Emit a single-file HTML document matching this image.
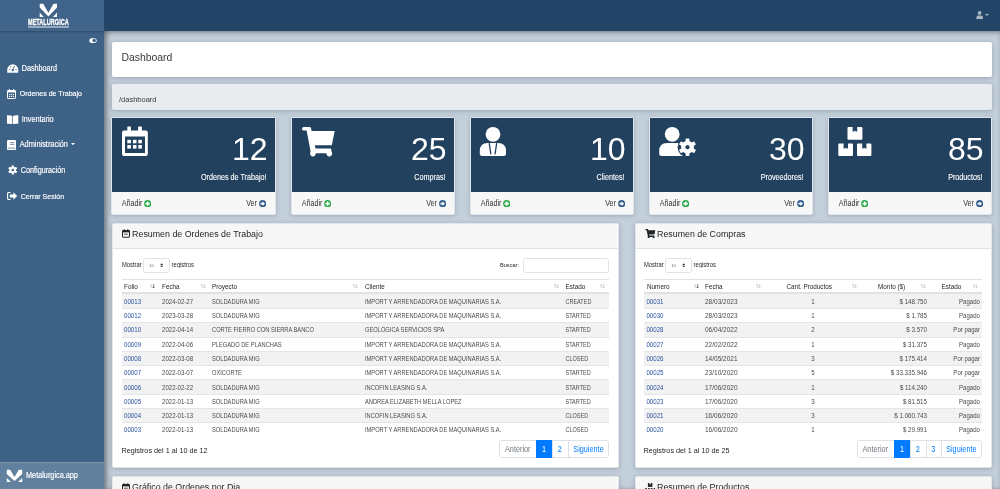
<!DOCTYPE html><html><head><meta charset="utf-8"><style>
*{margin:0;padding:0;box-sizing:border-box}
html,body{width:1000px;height:489px;overflow:hidden}
#wrap{position:absolute;left:0;top:0;width:1000px;height:489px;overflow:hidden;will-change:transform;background:#c3d0dc}
body{font-family:"Liberation Sans", sans-serif;background:#c3d0dc;position:relative;color:#212529}
.a{position:absolute;white-space:nowrap}
#side{position:absolute;left:0;top:0;width:104px;height:489px;background:#3e6186}
#logo{position:absolute;left:0;top:0;width:104px;height:31px;background:#41658a;box-shadow:0 1px 2px rgba(0,0,0,.25)}
#sfoot{position:absolute;left:0;top:462px;width:104px;height:27px;background:#61819f;border-top:1px solid #8193a6}
#top{position:absolute;left:104px;top:0;width:896px;height:31px;background:#234567}
#shade{position:absolute;left:104px;top:31px;width:896px;height:458px;box-shadow:inset 4px 0 5px -1px rgba(0,0,0,.36),inset 0 3px 5px -1px rgba(0,0,0,.24)}
.menu{color:#fff;font-size:7.2px;-webkit-text-stroke:0.15px #fff;transform:scaleY(1.15);transform-origin:0 6.5px}
.card{position:absolute;background:#fff;border-radius:2px;box-shadow:0 1px 5px rgba(0,0,0,.22)}
.stat{position:absolute;top:117px;width:164.4px;height:98px;border:1px solid #e2e6ea;border-radius:2px;background:#f7f7f7;box-shadow:0 1px 4px rgba(0,0,0,.18)}
.stat .dk{position:absolute;left:0;top:0;right:0;height:74px;background:#21415f}
.num{color:#fff;font-size:32px;}
.lbl{color:#fff;font-size:7.2px;-webkit-text-stroke:0.1px #fff;transform:scaleY(1.15);transform-origin:0 6.5px}
.ft{color:#333;font-size:7.2px;transform:scaleY(1.15);transform-origin:0 6.5px}
.ph{position:absolute;left:0;top:0;right:0;height:25.5px;background:#f7f7f7;border-bottom:1px solid #dfe3e7;border-radius:3px 3px 0 0}
.pt{font-size:8.85px;color:#212529}
.sm{font-size:5.8px;color:#212529;transform:scaleY(1.2);transform-origin:0 1.5px}
.th{font-size:6.2px;color:#212529;transform:scaleY(1.15);transform-origin:0 5.5px}
.td{font-size:6.1px;color:#464a4e;transform:scaleY(1.1);transform-origin:0 5.5px}
.lnk{color:#2a52a0}
.row{position:absolute;height:14.2px;border-top:1px solid #dee2e6}
.odd{background:#f2f2f2}
.pg{position:absolute;top:440px;height:17.6px;border:1px solid #dee2e6;border-radius:2px;background:#fff;display:flex}
.pg span{display:block;height:100%;border-left:1px solid #dee2e6;font-size:7.3px;color:#007bff;text-align:center;line-height:16px}
.pg span:first-child{border-left:0;color:#6c757d}
.pg span.act{background:#007bff;color:#fff;border-color:#007bff}
</style></head><body><div id="wrap"><div id="side"><div id="logo"><svg class="a" style="left:0;top:0" width="104" height="31" viewBox="0 0 104 31"><polygon fill="#fff" points="39.7,3.7 43.2,3.7 48.4,12.7 53.5,3.7 57,3.7 57,7.4 48.4,16.4 39.7,7.4"/><polygon fill="#fff" points="39.7,12.6 39.7,17 43.7,17"/><polygon fill="#fff" points="57,12.6 57,17 53,17"/></svg><div class="a" style="left:28px;top:16.5px;width:41px;font-size:8.4px;font-weight:bold;color:#fff;line-height:10px;letter-spacing:0px;-webkit-text-stroke:0.3px #fff;transform:scaleX(.665);transform-origin:0 0">METALURGICA</div><div class="a" style="left:28px;top:26.2px;width:41px;height:1.8px;background:rgba(255,255,255,.45)"></div></div><svg class="a" style="left:89.3px;top:38px" width="8" height="5.2" viewBox="0 0 9 6"><rect x="0.2" y="0.2" width="8.6" height="5.6" rx="2.8" fill="#fff"/><circle cx="5.9" cy="3" r="2" fill="#3e6186"/></svg><div class="a menu" style="left:21.8px;top:65.0px;line-height:8px;font-size:7.2px">Dashboard</div><div class="a menu" style="left:19.7px;top:90.4px;line-height:8px;font-size:7.05px">Ordenes de Trabajo</div><div class="a menu" style="left:21.8px;top:115.9px;line-height:8px;font-size:7.26px">Inventario</div><div class="a menu" style="left:19.7px;top:141.4px;line-height:8px;font-size:7.36px">Administración</div><div class="a menu" style="left:20.8px;top:167.2px;line-height:8px;font-size:7.23px">Configuración</div><div class="a menu" style="left:20.8px;top:193.0px;line-height:8px;font-size:7.02px">Cerrar Sesión</div><svg class="a" style="left:71px;top:143.2px" width="4" height="2.2" viewBox="0 0 4 2.2"><path d="M0 0h4L2 2.2z" fill="#fff"/></svg><svg class="a" style="left:7px;top:64px" width="11.5" height="9" viewBox="0 0 11.5 9"><path d="M5.75 0.3A5.5 5.5 0 0 0 0.25 5.8v2.9h11v-2.9A5.5 5.5 0 0 0 5.75 0.3z" fill="#fff"/><circle cx="5.75" cy="6.2" r="1.1" fill="#3e6186"/><path d="M5.6 6.2L7.6 2" stroke="#3e6186" stroke-width="0.9"/><circle cx="2.4" cy="5.5" r="0.6" fill="#3e6186"/><circle cx="9.1" cy="5.5" r="0.6" fill="#3e6186"/><circle cx="3.4" cy="3" r="0.6" fill="#3e6186"/></svg><svg class="a" style="left:7px;top:89.3px" width="9" height="10" viewBox="0 0 9 10"><rect x="0.5" y="1.5" width="8" height="8" rx="0.6" fill="none" stroke="#fff" stroke-width="1"/><rect x="0.5" y="1.5" width="8" height="2" fill="#fff"/><rect x="1.9" y="0" width="1" height="2" fill="#fff"/><rect x="6.1" y="0" width="1" height="2" fill="#fff"/><g fill="#fff"><rect x="2" y="5" width="1.2" height="1.1"/><rect x="3.9" y="5" width="1.2" height="1.1"/><rect x="5.8" y="5" width="1.2" height="1.1"/><rect x="2" y="6.9" width="1.2" height="1.1"/><rect x="3.9" y="6.9" width="1.2" height="1.1"/><rect x="5.8" y="6.9" width="1.2" height="1.1"/></g></svg><svg class="a" style="left:7px;top:114.7px" width="11.5" height="9.5" viewBox="0 0 11.5 9.5"><path d="M0 0.3Q2.8 -0.2 5.3 1v8.5Q2.8 8.3 0 8.8z" fill="#fff"/><path d="M11.3 0.3Q8.5 -0.2 6 1v8.5Q8.5 8.3 11.3 8.8z" fill="#fff"/></svg><svg class="a" style="left:7px;top:139.8px" width="9.5" height="10.5" viewBox="0 0 9.5 10.5"><rect x="0" y="0" width="9" height="10.2" rx="1.2" fill="#fff"/><g stroke="#3e6186" stroke-width="0.7"><path d="M3 2.6h4.5M3 4.4h4.5"/><path d="M1 8.1h7.3"/></g></svg><svg class="a" style="left:7.7px;top:165.2px" width="9.5" height="10" viewBox="-5 -5 10 10"><g fill="#fff"><circle r="3.4"/><rect x="-1.1" y="-4.8" width="2.2" height="2.2" transform="rotate(0)"/><rect x="-1.1" y="-4.8" width="2.2" height="2.2" transform="rotate(60)"/><rect x="-1.1" y="-4.8" width="2.2" height="2.2" transform="rotate(120)"/><rect x="-1.1" y="-4.8" width="2.2" height="2.2" transform="rotate(180)"/><rect x="-1.1" y="-4.8" width="2.2" height="2.2" transform="rotate(240)"/><rect x="-1.1" y="-4.8" width="2.2" height="2.2" transform="rotate(300)"/></g><circle r="1.3" fill="#3e6186"/></svg><svg class="a" style="left:7px;top:192.3px" width="10.5" height="8" viewBox="0 0 10.5 8"><path d="M3.6 0.5H1.6Q0.6 0.5 0.6 1.5v5Q0.6 7.5 1.6 7.5h2" fill="none" stroke="#fff" stroke-width="1.1"/><path d="M2.8 2.6h3.6V0.3L10.2 4 6.4 7.7V5.4H2.8z" fill="#fff"/></svg><div id="sfoot"><svg class="a" style="left:0;top:0" width="30" height="26" viewBox="0 0 30 26"><polygon fill="#fff" points="6.8,6.7 10.1,6.7 14.5,13.9 18.9,6.7 22.2,6.7 22.2,11.1 14.5,17.9 6.8,11.1"/><polygon fill="#fff" points="6.8,15 6.8,18.9 10.9,18.9"/><polygon fill="#fff" points="22.2,15 22.2,18.9 18.1,18.9"/></svg><div class="a" style="left:26px;top:8.9px;font-size:7.3px;color:#fff;line-height:8px;-webkit-text-stroke:0.15px #fff;transform:scaleY(1.15);transform-origin:0 6.5px">Metalurgica.app</div></div></div><div id="top"><svg class="a" style="left:872px;top:10px" width="14" height="10" viewBox="0 0 14 10"><circle cx="3.6" cy="2.9" r="1.9" fill="#a7b5c3"/><path d="M0.3 9.1v-1.2Q0.3 5.6 2.4 5.6h2.5Q7 5.6 7 7.9v1.2z" fill="#a7b5c3"/><path d="M8.8 4h4.3L10.95 6z" fill="#a7b5c3"/></svg></div><div id="shade"></div><div class="card" style="left:112px;top:42px;width:880px;height:35px"><div class="a" style="left:9.5px;top:9.5px;font-size:10.4px;color:#3a3a3a;line-height:12px;transform:scaleY(1.05);transform-origin:0 10px">Dashboard</div></div><div class="card" style="left:112px;top:84px;width:880px;height:26px;background:#e9ecef"><div class="a" style="left:7px;top:11.7px;font-size:7.5px;color:#3a3a3a;line-height:8px">/dashboard</div></div><div class="stat" style="left:111px;width:165px"><div class="dk"></div><div class="a num" style="right:7.5px;top:15px;line-height:32px">12</div><div class="a lbl" style="right:8.5px;top:56px;line-height:8px">Ordenes de Trabajo!</div><div class="a ft" style="left:9.7px;top:82.2px;line-height:8px">Añadir</div><svg class="a" style="left:32.1px;top:81.5px" width="7.3" height="7.3" viewBox="0 0 8 8"><circle cx="4" cy="4" r="3.9" fill="#28a745"/><path d="M4 1.6v4.8M1.6 4h4.8" stroke="#fff" stroke-width="1.8"/></svg><div class="a ft" style="right:18px;top:82.2px;line-height:8px">Ver</div><svg class="a" style="left:147px;top:81.5px" width="7.3" height="7.3" viewBox="0 0 8 8"><circle cx="4" cy="4" r="3.9" fill="#2f5b8a"/><path d="M1.6 3.1h2.2V1.4L6.6 4 3.8 6.6V4.9H1.6z" fill="#fff"/></svg></div><div class="stat" style="left:291px;width:164px"><div class="dk"></div><div class="a num" style="right:7.5px;top:15px;line-height:32px">25</div><div class="a lbl" style="right:8.5px;top:56px;line-height:8px">Compras!</div><div class="a ft" style="left:9.7px;top:82.2px;line-height:8px">Añadir</div><svg class="a" style="left:32.1px;top:81.5px" width="7.3" height="7.3" viewBox="0 0 8 8"><circle cx="4" cy="4" r="3.9" fill="#28a745"/><path d="M4 1.6v4.8M1.6 4h4.8" stroke="#fff" stroke-width="1.8"/></svg><div class="a ft" style="right:17px;top:82.2px;line-height:8px">Ver</div><svg class="a" style="left:147px;top:81.5px" width="7.3" height="7.3" viewBox="0 0 8 8"><circle cx="4" cy="4" r="3.9" fill="#2f5b8a"/><path d="M1.6 3.1h2.2V1.4L6.6 4 3.8 6.6V4.9H1.6z" fill="#fff"/></svg></div><div class="stat" style="left:470px;width:164px"><div class="dk"></div><div class="a num" style="right:7.5px;top:15px;line-height:32px">10</div><div class="a lbl" style="right:8.5px;top:56px;line-height:8px">Clientes!</div><div class="a ft" style="left:9.7px;top:82.2px;line-height:8px">Añadir</div><svg class="a" style="left:32.1px;top:81.5px" width="7.3" height="7.3" viewBox="0 0 8 8"><circle cx="4" cy="4" r="3.9" fill="#28a745"/><path d="M4 1.6v4.8M1.6 4h4.8" stroke="#fff" stroke-width="1.8"/></svg><div class="a ft" style="right:17px;top:82.2px;line-height:8px">Ver</div><svg class="a" style="left:147px;top:81.5px" width="7.3" height="7.3" viewBox="0 0 8 8"><circle cx="4" cy="4" r="3.9" fill="#2f5b8a"/><path d="M1.6 3.1h2.2V1.4L6.6 4 3.8 6.6V4.9H1.6z" fill="#fff"/></svg></div><div class="stat" style="left:649px;width:164px"><div class="dk"></div><div class="a num" style="right:7.5px;top:15px;line-height:32px">30</div><div class="a lbl" style="right:8.5px;top:56px;line-height:8px">Proveedores!</div><div class="a ft" style="left:9.7px;top:82.2px;line-height:8px">Añadir</div><svg class="a" style="left:32.1px;top:81.5px" width="7.3" height="7.3" viewBox="0 0 8 8"><circle cx="4" cy="4" r="3.9" fill="#28a745"/><path d="M4 1.6v4.8M1.6 4h4.8" stroke="#fff" stroke-width="1.8"/></svg><div class="a ft" style="right:17px;top:82.2px;line-height:8px">Ver</div><svg class="a" style="left:147px;top:81.5px" width="7.3" height="7.3" viewBox="0 0 8 8"><circle cx="4" cy="4" r="3.9" fill="#2f5b8a"/><path d="M1.6 3.1h2.2V1.4L6.6 4 3.8 6.6V4.9H1.6z" fill="#fff"/></svg></div><div class="stat" style="left:828px;width:164px"><div class="dk"></div><div class="a num" style="right:7.5px;top:15px;line-height:32px">85</div><div class="a lbl" style="right:8.5px;top:56px;line-height:8px">Productos!</div><div class="a ft" style="left:9.7px;top:82.2px;line-height:8px">Añadir</div><svg class="a" style="left:32.1px;top:81.5px" width="7.3" height="7.3" viewBox="0 0 8 8"><circle cx="4" cy="4" r="3.9" fill="#28a745"/><path d="M4 1.6v4.8M1.6 4h4.8" stroke="#fff" stroke-width="1.8"/></svg><div class="a ft" style="right:17px;top:82.2px;line-height:8px">Ver</div><svg class="a" style="left:147px;top:81.5px" width="7.3" height="7.3" viewBox="0 0 8 8"><circle cx="4" cy="4" r="3.9" fill="#2f5b8a"/><path d="M1.6 3.1h2.2V1.4L6.6 4 3.8 6.6V4.9H1.6z" fill="#fff"/></svg></div><div class="card" style="left:112px;top:222.5px;width:506.5px;height:245px;border:1px solid #e3e7eb"><div class="ph"></div><div class="a pt" style="left:19.1px;top:5.1px;line-height:10px">Resumen de Ordenes de Trabajo</div><svg class="a" style="left:9px;top:5.8px" width="8" height="8.8" viewBox="0 0 8.5 9"><rect x="0.55" y="1.5" width="7.4" height="7" rx="0.9" fill="none" stroke="#212529" stroke-width="1.1"/><rect x="0.5" y="1.5" width="7.5" height="1.9" fill="#212529"/><rect x="1.8" y="0.1" width="1.1" height="2" fill="#212529"/><rect x="5.6" y="0.1" width="1.1" height="2" fill="#212529"/><rect x="2.2" y="4.6" width="4" height="1.6" fill="#888"/></svg></div><div class="card" style="left:635px;top:222.5px;width:357px;height:245px;border:1px solid #e3e7eb"><div class="ph"></div><div class="a pt" style="left:21.0px;top:5.1px;line-height:10px">Resumen de Compras</div><svg class="a" style="left:8.5px;top:5.3px" width="11" height="9.5" viewBox="0 0 34 31"><g fill="#212529"><path d="M1.85 0h5.6q1.2 0 1.5 1.2l4.6 20.3h14.5q1.3 0 1.3 1.3v2.3q0 1.2-1.3 1.2H10.2q-1.2 0-1.5-1.2L4.6 3.7H1.85a1.85 1.85 0 0 1 0-3.7z"/><path d="M5.6 4h27.1l-2.9 14.3H9z"/><circle cx="10.9" cy="26.7" r="3.2"/><circle cx="27.3" cy="26.7" r="3.2"/></g></svg></div><div class="card" style="left:112px;top:476px;width:506.5px;height:40px;border:1px solid #e3e7eb"><div class="ph"></div><div class="a pt" style="left:19.1px;top:5.1px;line-height:10px">Gráfico de Ordenes por Dia</div><svg class="a" style="left:9px;top:5.8px" width="8" height="8.8" viewBox="0 0 8.5 9"><rect x="0.55" y="1.5" width="7.4" height="7" rx="0.9" fill="none" stroke="#212529" stroke-width="1.1"/><rect x="0.5" y="1.5" width="7.5" height="1.9" fill="#212529"/><rect x="1.8" y="0.1" width="1.1" height="2" fill="#212529"/><rect x="5.6" y="0.1" width="1.1" height="2" fill="#212529"/><rect x="2.2" y="4.6" width="4" height="1.6" fill="#888"/></svg></div><div class="card" style="left:635px;top:476px;width:357px;height:40px;border:1px solid #e3e7eb"><div class="ph"></div><div class="a pt" style="left:21.0px;top:5.1px;line-height:10px">Resumen de Productos</div><svg class="a" style="left:8.5px;top:6px" width="10.5" height="9" viewBox="0 0 34 30"><g fill="#212529"><rect x="9.2" y="0" width="14.9" height="12.9"/><rect x="0" y="16.6" width="14.7" height="12.4"/><rect x="18.7" y="16.6" width="14.4" height="12.4"/></g><g fill="#f7f7f7"><rect x="14.3" y="-0.5" width="4.6" height="5"/><rect x="5.3" y="16.1" width="4.4" height="5.5"/><rect x="23.9" y="16.1" width="4.2" height="5.5"/></g></svg></div><svg class="a" style="left:112px;top:118px;overflow:visible" width="163" height="74"><svg x="10" y="8.4" width="26" height="30" viewBox="0 0 26 30" overflow="visible"><path fill-rule="evenodd" fill="#fff" d="M2 4.2h21.8a2 2 0 0 1 2 2v21.3a2 2 0 0 1-2 2H2a2 2 0 0 1-2-2V6.2a2 2 0 0 1 2-2zM3 10v16.5h20V10z"/><rect fill="#fff" x="5.3" y="0" width="3.6" height="5" rx="0.5"/><rect fill="#fff" x="16.1" y="0" width="3.8" height="5" rx="0.5"/><g fill="#fff"><rect x="5.3" y="13.4" width="3.6" height="3.5"/><rect x="10.9" y="13.4" width="3.6" height="3.5"/><rect x="16.3" y="13.4" width="3.6" height="3.5"/><rect x="5.3" y="18.6" width="3.6" height="3.6"/><rect x="10.9" y="18.6" width="3.6" height="3.6"/><rect x="16.3" y="18.6" width="3.6" height="3.6"/></g></svg></svg><svg class="a" style="left:292px;top:118px;overflow:visible" width="163" height="74"><svg x="10" y="8.9" width="34" height="31" viewBox="0 0 34 31" overflow="visible"><g fill="#fff"><path d="M1.85 0h5.6q1.2 0 1.5 1.2l4.6 20.3h14.5q1.3 0 1.3 1.3v2.3q0 1.2-1.3 1.2H10.2q-1.2 0-1.5-1.2L4.6 3.7H1.85a1.85 1.85 0 0 1 0-3.7z"/><path d="M5.6 4h27.1l-2.9 14.3H9z"/><circle cx="10.9" cy="26.7" r="2.8"/><circle cx="27.3" cy="26.7" r="2.8"/></g></svg></svg><svg class="a" style="left:471px;top:118px;overflow:visible" width="163" height="74"><svg x="8.8" y="8.8" width="27" height="30" viewBox="0 0 27 30" overflow="visible"><circle cx="13.2" cy="7.5" r="7.4" fill="#fff"/><path fill="#fff" d="M0 26.8v-2.6q0-8 8-8h10.2q8 0 8 8v2.6q0 2.5-2.5 2.5H2.5Q0 29.3 0 26.8z"/><path d="M9.4 16.3l1.7 11.2M16.9 16.3l-1.7 11.2" stroke="#21415f" stroke-width="1.3"/></svg></svg><svg class="a" style="left:650px;top:118px;overflow:visible" width="163" height="74"><svg x="9.2" y="8.8" width="39" height="30" viewBox="0 0 39 30" overflow="visible"><circle cx="13" cy="7.5" r="7.4" fill="#fff"/><path fill="#fff" d="M0 26.8v-2.6q0-8 8-8h10.2q8 0 8 8v2.6q0 2.5-2.5 2.5H2.5Q0 29.3 0 26.8z"/><circle cx="28.3" cy="20.4" r="9.9" fill="#21415f"/><g transform="translate(28.3 20.4)" fill="#fff"><circle r="6.4"/><rect x="-1.9" y="-8.7" width="3.8" height="3.6" rx="0.6" transform="rotate(0)"/><rect x="-1.9" y="-8.7" width="3.8" height="3.6" rx="0.6" transform="rotate(60)"/><rect x="-1.9" y="-8.7" width="3.8" height="3.6" rx="0.6" transform="rotate(120)"/><rect x="-1.9" y="-8.7" width="3.8" height="3.6" rx="0.6" transform="rotate(180)"/><rect x="-1.9" y="-8.7" width="3.8" height="3.6" rx="0.6" transform="rotate(240)"/><rect x="-1.9" y="-8.7" width="3.8" height="3.6" rx="0.6" transform="rotate(300)"/><circle r="2.1" fill="#21415f"/></g></svg></svg><svg class="a" style="left:829px;top:118px;overflow:visible" width="163" height="74"><svg x="9.3" y="8.9" width="34" height="30" viewBox="0 0 34 30" overflow="visible"><g fill="#fff"><rect x="9.2" y="0" width="14.9" height="12.9" rx="1"/><rect x="0" y="16.6" width="14.7" height="12.4" rx="1"/><rect x="18.7" y="16.6" width="14.4" height="12.4" rx="1"/></g><g fill="#21415f"><path d="M14.3 -0.5h4.6v5h-1.3l-1 -0.8-1 0.8h-1.3z"/><path d="M5.3 16.1h4.4v5.5h-1.2l-1 -0.8-1 0.8h-1.2z"/><path d="M23.9 16.1h4.2v5.5h-1.1l-1 -0.8-1 0.8h-1.1z"/></g></svg></svg><div class="a sm" style="left:122px;top:261px;line-height:7px">Mostrar</div><div class="a" style="left:143.0px;top:258px;width:27px;height:14.5px;border:1px solid #dfe3e8;border-radius:2.5px;background:#fff"></div><div class="a" style="left:149.2px;top:262.6px;font-size:4.3px;color:#6c7278;line-height:5px">10</div><svg class="a" style="left:160.2px;top:262.6px" width="3.4" height="4.8" viewBox="0 0 3.4 4.8"><path d="M0.2 2L1.7 0.2 3.2 2zM0.2 2.8L1.7 4.6 3.2 2.8z" fill="#333"/></svg><div class="a sm" style="left:171.6px;top:261px;line-height:7px">registros</div><div class="a sm" style="left:500px;top:261.5px;line-height:7px;font-size:5.6px;transform:none">Buscar:</div><div class="a" style="left:523.2px;top:258px;width:86px;height:15px;border:1px solid #dfe3e8;border-radius:2.5px;background:#fff"></div><div class="a" style="left:122px;top:279px;width:487.3px;height:1px;background:#dee2e6"></div><div class="a th" style="left:124px;top:283.00px;font-size:6.35px;line-height:7px">Folio</div><svg class="a" style="left:150.2px;top:284.4px" width="5" height="4.5" viewBox="0 0 5 4.5"><path d="M1.2 4.3V0.6M0.2 1.6L1.2 0.4 2.2 1.6" stroke="#b5b9bd" stroke-width="0.6" fill="none"/><path d="M3.6 0.2V3.9M2.6 2.9L3.6 4.1 4.6 2.9" stroke="#333" stroke-width="0.6" fill="none"/></svg><div class="a th" style="left:162px;top:283.00px;font-size:6.35px;line-height:7px">Fecha</div><svg class="a" style="left:200.8px;top:284.4px" width="5" height="4.5" viewBox="0 0 5 4.5"><path d="M1.2 4.3V0.6M0.2 1.6L1.2 0.4 2.2 1.6" stroke="#b5b9bd" stroke-width="0.6" fill="none"/><path d="M3.6 0.2V3.9M2.6 2.9L3.6 4.1 4.6 2.9" stroke="#b5b9bd" stroke-width="0.6" fill="none"/></svg><div class="a th" style="left:212px;top:283.00px;font-size:6.35px;line-height:7px">Proyecto</div><svg class="a" style="left:353px;top:284.4px" width="5" height="4.5" viewBox="0 0 5 4.5"><path d="M1.2 4.3V0.6M0.2 1.6L1.2 0.4 2.2 1.6" stroke="#b5b9bd" stroke-width="0.6" fill="none"/><path d="M3.6 0.2V3.9M2.6 2.9L3.6 4.1 4.6 2.9" stroke="#b5b9bd" stroke-width="0.6" fill="none"/></svg><div class="a th" style="left:365px;top:283.00px;font-size:6.35px;line-height:7px">Cliente</div><svg class="a" style="left:553.8px;top:284.4px" width="5" height="4.5" viewBox="0 0 5 4.5"><path d="M1.2 4.3V0.6M0.2 1.6L1.2 0.4 2.2 1.6" stroke="#b5b9bd" stroke-width="0.6" fill="none"/><path d="M3.6 0.2V3.9M2.6 2.9L3.6 4.1 4.6 2.9" stroke="#b5b9bd" stroke-width="0.6" fill="none"/></svg><div class="a th" style="left:565.5px;top:283.00px;font-size:6.35px;line-height:7px">Estado</div><svg class="a" style="left:600.3px;top:284.4px" width="5" height="4.5" viewBox="0 0 5 4.5"><path d="M1.2 4.3V0.6M0.2 1.6L1.2 0.4 2.2 1.6" stroke="#b5b9bd" stroke-width="0.6" fill="none"/><path d="M3.6 0.2V3.9M2.6 2.9L3.6 4.1 4.6 2.9" stroke="#b5b9bd" stroke-width="0.6" fill="none"/></svg><div class="a" style="left:122px;top:292.3px;width:487.3px;height:1.6px;background:#dee2e6"></div><div class="a" style="left:122px;top:293.70px;width:487.3px;height:14.29px;background:#f2f2f2"></div><div class="a td lnk" style="left:124px;top:298.00px;font-size:6.15px;line-height:7px">00013</div><div class="a td" style="left:162px;top:298.00px;font-size:6.08px;line-height:7px">2024-02-27</div><div class="a td" style="left:212px;top:299.00px;font-size:5.72px;line-height:7px;transform:scaleY(1.22)">SOLDADURA MIG</div><div class="a td" style="left:365px;top:299.00px;font-size:5.73px;line-height:7px;transform:scaleY(1.22)">IMPORT Y ARRENDADORA DE MAQUINARIAS S.A.</div><div class="a td" style="left:565.5px;top:299.00px;font-size:5.5px;line-height:7px;transform:scaleY(1.22)">CREATED</div><div class="a" style="left:122px;top:307.99px;width:487.3px;height:1px;background:#e3e6e9"></div><div class="a td lnk" style="left:124px;top:312.00px;font-size:6.15px;line-height:7px">00012</div><div class="a td" style="left:162px;top:312.00px;font-size:6.08px;line-height:7px">2023-03-28</div><div class="a td" style="left:212px;top:313.00px;font-size:5.72px;line-height:7px;transform:scaleY(1.22)">SOLDADURA MIG</div><div class="a td" style="left:365px;top:313.00px;font-size:5.73px;line-height:7px;transform:scaleY(1.22)">IMPORT Y ARRENDADORA DE MAQUINARIAS S.A.</div><div class="a td" style="left:565.5px;top:313.00px;font-size:5.5px;line-height:7px;transform:scaleY(1.22)">STARTED</div><div class="a" style="left:122px;top:322.28px;width:487.3px;height:14.29px;background:#f2f2f2"></div><div class="a" style="left:122px;top:322.28px;width:487.3px;height:1px;background:#e3e6e9"></div><div class="a td lnk" style="left:124px;top:326.00px;font-size:6.15px;line-height:7px">00010</div><div class="a td" style="left:162px;top:326.00px;font-size:6.08px;line-height:7px">2022-04-14</div><div class="a td" style="left:212px;top:327.00px;font-size:5.72px;line-height:7px;transform:scaleY(1.22)">CORTE FIERRO CON SIERRA BANCO</div><div class="a td" style="left:365px;top:327.00px;font-size:5.73px;line-height:7px;transform:scaleY(1.22)">GEOLOGICA SERVICIOS SPA</div><div class="a td" style="left:565.5px;top:327.00px;font-size:5.5px;line-height:7px;transform:scaleY(1.22)">STARTED</div><div class="a" style="left:122px;top:336.57px;width:487.3px;height:1px;background:#e3e6e9"></div><div class="a td lnk" style="left:124px;top:341.00px;font-size:6.15px;line-height:7px">00009</div><div class="a td" style="left:162px;top:341.00px;font-size:6.08px;line-height:7px">2022-04-06</div><div class="a td" style="left:212px;top:342.00px;font-size:5.72px;line-height:7px;transform:scaleY(1.22)">PLEGADO DE PLANCHAS</div><div class="a td" style="left:365px;top:342.00px;font-size:5.73px;line-height:7px;transform:scaleY(1.22)">IMPORT Y ARRENDADORA DE MAQUINARIAS S.A.</div><div class="a td" style="left:565.5px;top:342.00px;font-size:5.5px;line-height:7px;transform:scaleY(1.22)">STARTED</div><div class="a" style="left:122px;top:350.86px;width:487.3px;height:14.29px;background:#f2f2f2"></div><div class="a" style="left:122px;top:350.86px;width:487.3px;height:1px;background:#e3e6e9"></div><div class="a td lnk" style="left:124px;top:355.00px;font-size:6.15px;line-height:7px">00008</div><div class="a td" style="left:162px;top:355.00px;font-size:6.08px;line-height:7px">2022-03-08</div><div class="a td" style="left:212px;top:356.00px;font-size:5.72px;line-height:7px;transform:scaleY(1.22)">SOLDADURA MIG</div><div class="a td" style="left:365px;top:356.00px;font-size:5.73px;line-height:7px;transform:scaleY(1.22)">IMPORT Y ARRENDADORA DE MAQUINARIAS S.A.</div><div class="a td" style="left:565.5px;top:356.00px;font-size:5.5px;line-height:7px;transform:scaleY(1.22)">CLOSED</div><div class="a" style="left:122px;top:365.15px;width:487.3px;height:1px;background:#e3e6e9"></div><div class="a td lnk" style="left:124px;top:369.00px;font-size:6.15px;line-height:7px">00007</div><div class="a td" style="left:162px;top:369.00px;font-size:6.08px;line-height:7px">2022-03-07</div><div class="a td" style="left:212px;top:370.00px;font-size:5.72px;line-height:7px;transform:scaleY(1.22)">OXICORTE</div><div class="a td" style="left:365px;top:370.00px;font-size:5.73px;line-height:7px;transform:scaleY(1.22)">IMPORT Y ARRENDADORA DE MAQUINARIAS S.A.</div><div class="a td" style="left:565.5px;top:370.00px;font-size:5.5px;line-height:7px;transform:scaleY(1.22)">STARTED</div><div class="a" style="left:122px;top:379.44px;width:487.3px;height:14.29px;background:#f2f2f2"></div><div class="a" style="left:122px;top:379.44px;width:487.3px;height:1px;background:#e3e6e9"></div><div class="a td lnk" style="left:124px;top:384.00px;font-size:6.15px;line-height:7px">00006</div><div class="a td" style="left:162px;top:384.00px;font-size:6.08px;line-height:7px">2022-02-22</div><div class="a td" style="left:212px;top:385.00px;font-size:5.72px;line-height:7px;transform:scaleY(1.22)">SOLDADURA MIG</div><div class="a td" style="left:365px;top:385.00px;font-size:5.73px;line-height:7px;transform:scaleY(1.22)">INCOFIN LEASING S.A.</div><div class="a td" style="left:565.5px;top:385.00px;font-size:5.5px;line-height:7px;transform:scaleY(1.22)">STARTED</div><div class="a" style="left:122px;top:393.73px;width:487.3px;height:1px;background:#e3e6e9"></div><div class="a td lnk" style="left:124px;top:398.00px;font-size:6.15px;line-height:7px">00005</div><div class="a td" style="left:162px;top:398.00px;font-size:6.08px;line-height:7px">2022-01-13</div><div class="a td" style="left:212px;top:399.00px;font-size:5.72px;line-height:7px;transform:scaleY(1.22)">SOLDADURA MIG</div><div class="a td" style="left:365px;top:399.00px;font-size:5.73px;line-height:7px;transform:scaleY(1.22)">ANDREA ELIZABETH MELLA LOPEZ</div><div class="a td" style="left:565.5px;top:399.00px;font-size:5.5px;line-height:7px;transform:scaleY(1.22)">STARTED</div><div class="a" style="left:122px;top:408.02px;width:487.3px;height:14.29px;background:#f2f2f2"></div><div class="a" style="left:122px;top:408.02px;width:487.3px;height:1px;background:#e3e6e9"></div><div class="a td lnk" style="left:124px;top:412.00px;font-size:6.15px;line-height:7px">00004</div><div class="a td" style="left:162px;top:412.00px;font-size:6.08px;line-height:7px">2022-01-13</div><div class="a td" style="left:212px;top:413.00px;font-size:5.72px;line-height:7px;transform:scaleY(1.22)">SOLDADURA MIG</div><div class="a td" style="left:365px;top:413.00px;font-size:5.73px;line-height:7px;transform:scaleY(1.22)">INCOFIN LEASING S.A.</div><div class="a td" style="left:565.5px;top:413.00px;font-size:5.5px;line-height:7px;transform:scaleY(1.22)">CLOSED</div><div class="a" style="left:122px;top:422.31px;width:487.3px;height:1px;background:#e3e6e9"></div><div class="a td lnk" style="left:124px;top:426.00px;font-size:6.15px;line-height:7px">00003</div><div class="a td" style="left:162px;top:426.00px;font-size:6.08px;line-height:7px">2022-01-13</div><div class="a td" style="left:212px;top:427.00px;font-size:5.72px;line-height:7px;transform:scaleY(1.22)">SOLDADURA MIG</div><div class="a td" style="left:365px;top:427.00px;font-size:5.73px;line-height:7px;transform:scaleY(1.22)">IMPORT Y ARRENDADORA DE MAQUINARIAS S.A.</div><div class="a td" style="left:565.5px;top:427.00px;font-size:5.5px;line-height:7px;transform:scaleY(1.22)">CLOSED</div><div class="a" style="left:121.4px;top:447px;font-size:7.25px;line-height:8px;color:#212529;transform:scaleY(1.12);transform-origin:0 6.5px">Registros del 1 al 10 de 12</div><div class="a" style="left:499.4px;top:440.2px;width:110.0px;height:17.5px;border:1px solid #dee2e6;border-radius:2.5px;background:#fff"></div><div class="a" style="left:499.4px;width:36.80000000000007px;text-align:center;top:445.6px;font-size:7.3px;line-height:8px;color:#6c757d;transform:scaleY(1.15);transform-origin:0 6.5px">Anterior</div><div class="a" style="left:536.2px;top:440.2px;width:1px;height:17.5px;background:#dee2e6"></div><div class="a" style="left:536.2px;top:440.2px;width:15.799999999999955px;height:17.5px;background:#007bff"></div><div class="a" style="left:536.2px;width:15.799999999999955px;text-align:center;top:445.6px;font-size:7.3px;line-height:8px;color:#fff;transform:scaleY(1.15);transform-origin:0 6.5px">1</div><div class="a" style="left:552px;top:440.2px;width:1px;height:17.5px;background:#dee2e6"></div><div class="a" style="left:552px;width:15.600000000000023px;text-align:center;top:445.6px;font-size:7.3px;line-height:8px;color:#007bff;transform:scaleY(1.15);transform-origin:0 6.5px">2</div><div class="a" style="left:567.6px;top:440.2px;width:1px;height:17.5px;background:#dee2e6"></div><div class="a" style="left:567.6px;width:41.799999999999955px;text-align:center;top:445.6px;font-size:7.3px;line-height:8px;color:#007bff;transform:scaleY(1.15);transform-origin:0 6.5px">Siguiente</div><div class="a sm" style="left:644px;top:261px;line-height:7px">Mostrar</div><div class="a" style="left:665.0px;top:258px;width:27px;height:14.5px;border:1px solid #dfe3e8;border-radius:2.5px;background:#fff"></div><div class="a" style="left:671.2px;top:262.6px;font-size:4.3px;color:#6c7278;line-height:5px">10</div><svg class="a" style="left:682.2px;top:262.6px" width="3.4" height="4.8" viewBox="0 0 3.4 4.8"><path d="M0.2 2L1.7 0.2 3.2 2zM0.2 2.8L1.7 4.6 3.2 2.8z" fill="#333"/></svg><div class="a sm" style="left:693.6px;top:261px;line-height:7px">registros</div><div class="a" style="left:644px;top:279px;width:337.5px;height:1px;background:#dee2e6"></div><div class="a th" style="left:647px;top:283.00px;font-size:6.35px;line-height:7px">Numero</div><svg class="a" style="left:694px;top:284.4px" width="5" height="4.5" viewBox="0 0 5 4.5"><path d="M1.2 4.3V0.6M0.2 1.6L1.2 0.4 2.2 1.6" stroke="#b5b9bd" stroke-width="0.6" fill="none"/><path d="M3.6 0.2V3.9M2.6 2.9L3.6 4.1 4.6 2.9" stroke="#333" stroke-width="0.6" fill="none"/></svg><div class="a th" style="left:705px;top:283.00px;font-size:6.35px;line-height:7px">Fecha</div><svg class="a" style="left:755.6px;top:284.4px" width="5" height="4.5" viewBox="0 0 5 4.5"><path d="M1.2 4.3V0.6M0.2 1.6L1.2 0.4 2.2 1.6" stroke="#b5b9bd" stroke-width="0.6" fill="none"/><path d="M3.6 0.2V3.9M2.6 2.9L3.6 4.1 4.6 2.9" stroke="#b5b9bd" stroke-width="0.6" fill="none"/></svg><div class="a th" style="right:168.00px;top:283.00px;font-size:6.35px;line-height:7px">Cant. Productos</div><svg class="a" style="left:852.3px;top:284.4px" width="5" height="4.5" viewBox="0 0 5 4.5"><path d="M1.2 4.3V0.6M0.2 1.6L1.2 0.4 2.2 1.6" stroke="#b5b9bd" stroke-width="0.6" fill="none"/><path d="M3.6 0.2V3.9M2.6 2.9L3.6 4.1 4.6 2.9" stroke="#b5b9bd" stroke-width="0.6" fill="none"/></svg><div class="a th" style="right:94.80px;top:283.00px;font-size:6.35px;line-height:7px">Monto ($)</div><svg class="a" style="left:920.6px;top:284.4px" width="5" height="4.5" viewBox="0 0 5 4.5"><path d="M1.2 4.3V0.6M0.2 1.6L1.2 0.4 2.2 1.6" stroke="#b5b9bd" stroke-width="0.6" fill="none"/><path d="M3.6 0.2V3.9M2.6 2.9L3.6 4.1 4.6 2.9" stroke="#b5b9bd" stroke-width="0.6" fill="none"/></svg><div class="a th" style="right:38.70px;top:283.00px;font-size:6.35px;line-height:7px">Estado</div><svg class="a" style="left:973.4px;top:284.4px" width="5" height="4.5" viewBox="0 0 5 4.5"><path d="M1.2 4.3V0.6M0.2 1.6L1.2 0.4 2.2 1.6" stroke="#b5b9bd" stroke-width="0.6" fill="none"/><path d="M3.6 0.2V3.9M2.6 2.9L3.6 4.1 4.6 2.9" stroke="#b5b9bd" stroke-width="0.6" fill="none"/></svg><div class="a" style="left:644px;top:292.3px;width:337.5px;height:1.6px;background:#dee2e6"></div><div class="a" style="left:644px;top:293.70px;width:337.5px;height:14.29px;background:#f2f2f2"></div><div class="a td lnk" style="left:646.4px;top:298.00px;font-size:6.15px;line-height:7px">00031</div><div class="a td" style="left:705px;top:298.00px;font-size:6.5px;line-height:7px">28/03/2023</div><div class="a td" style="left:793px;width:40px;text-align:center;top:298.00px;font-size:6.1px;line-height:7px">1</div><div class="a td" style="right:73.00px;top:298.00px;font-size:6.2px;line-height:7px">$ 148.750</div><div class="a td" style="right:20.10px;top:299.00px;font-size:6.06px;line-height:7px">Pagado</div><div class="a" style="left:644px;top:307.99px;width:337.5px;height:1px;background:#e3e6e9"></div><div class="a td lnk" style="left:646.4px;top:312.00px;font-size:6.15px;line-height:7px">00030</div><div class="a td" style="left:705px;top:312.00px;font-size:6.5px;line-height:7px">28/03/2023</div><div class="a td" style="left:793px;width:40px;text-align:center;top:312.00px;font-size:6.1px;line-height:7px">1</div><div class="a td" style="right:73.00px;top:312.00px;font-size:6.2px;line-height:7px">$ 1.785</div><div class="a td" style="right:20.10px;top:313.00px;font-size:6.06px;line-height:7px">Pagado</div><div class="a" style="left:644px;top:322.28px;width:337.5px;height:14.29px;background:#f2f2f2"></div><div class="a" style="left:644px;top:322.28px;width:337.5px;height:1px;background:#e3e6e9"></div><div class="a td lnk" style="left:646.4px;top:326.00px;font-size:6.15px;line-height:7px">00028</div><div class="a td" style="left:705px;top:326.00px;font-size:6.5px;line-height:7px">06/04/2022</div><div class="a td" style="left:793px;width:40px;text-align:center;top:326.00px;font-size:6.1px;line-height:7px">2</div><div class="a td" style="right:73.00px;top:326.00px;font-size:6.2px;line-height:7px">$ 3.570</div><div class="a td" style="right:20.10px;top:327.00px;font-size:6.06px;line-height:7px">Por pagar</div><div class="a" style="left:644px;top:336.57px;width:337.5px;height:1px;background:#e3e6e9"></div><div class="a td lnk" style="left:646.4px;top:341.00px;font-size:6.15px;line-height:7px">00027</div><div class="a td" style="left:705px;top:341.00px;font-size:6.5px;line-height:7px">22/02/2022</div><div class="a td" style="left:793px;width:40px;text-align:center;top:341.00px;font-size:6.1px;line-height:7px">1</div><div class="a td" style="right:73.00px;top:341.00px;font-size:6.2px;line-height:7px">$ 31.375</div><div class="a td" style="right:20.10px;top:342.00px;font-size:6.06px;line-height:7px">Pagado</div><div class="a" style="left:644px;top:350.86px;width:337.5px;height:14.29px;background:#f2f2f2"></div><div class="a" style="left:644px;top:350.86px;width:337.5px;height:1px;background:#e3e6e9"></div><div class="a td lnk" style="left:646.4px;top:355.00px;font-size:6.15px;line-height:7px">00026</div><div class="a td" style="left:705px;top:355.00px;font-size:6.5px;line-height:7px">14/05/2021</div><div class="a td" style="left:793px;width:40px;text-align:center;top:355.00px;font-size:6.1px;line-height:7px">3</div><div class="a td" style="right:73.00px;top:355.00px;font-size:6.2px;line-height:7px">$ 175.414</div><div class="a td" style="right:20.10px;top:356.00px;font-size:6.06px;line-height:7px">Por pagar</div><div class="a" style="left:644px;top:365.15px;width:337.5px;height:1px;background:#e3e6e9"></div><div class="a td lnk" style="left:646.4px;top:369.00px;font-size:6.15px;line-height:7px">00025</div><div class="a td" style="left:705px;top:369.00px;font-size:6.5px;line-height:7px">23/10/2020</div><div class="a td" style="left:793px;width:40px;text-align:center;top:369.00px;font-size:6.1px;line-height:7px">5</div><div class="a td" style="right:73.00px;top:369.00px;font-size:6.2px;line-height:7px">$ 33.335.946</div><div class="a td" style="right:20.10px;top:370.00px;font-size:6.06px;line-height:7px">Por pagar</div><div class="a" style="left:644px;top:379.44px;width:337.5px;height:14.29px;background:#f2f2f2"></div><div class="a" style="left:644px;top:379.44px;width:337.5px;height:1px;background:#e3e6e9"></div><div class="a td lnk" style="left:646.4px;top:384.00px;font-size:6.15px;line-height:7px">00024</div><div class="a td" style="left:705px;top:384.00px;font-size:6.5px;line-height:7px">17/06/2020</div><div class="a td" style="left:793px;width:40px;text-align:center;top:384.00px;font-size:6.1px;line-height:7px">1</div><div class="a td" style="right:73.00px;top:384.00px;font-size:6.2px;line-height:7px">$ 114.240</div><div class="a td" style="right:20.10px;top:385.00px;font-size:6.06px;line-height:7px">Pagado</div><div class="a" style="left:644px;top:393.73px;width:337.5px;height:1px;background:#e3e6e9"></div><div class="a td lnk" style="left:646.4px;top:398.00px;font-size:6.15px;line-height:7px">00023</div><div class="a td" style="left:705px;top:398.00px;font-size:6.5px;line-height:7px">17/06/2020</div><div class="a td" style="left:793px;width:40px;text-align:center;top:398.00px;font-size:6.1px;line-height:7px">3</div><div class="a td" style="right:73.00px;top:398.00px;font-size:6.2px;line-height:7px">$ 81.515</div><div class="a td" style="right:20.10px;top:399.00px;font-size:6.06px;line-height:7px">Pagado</div><div class="a" style="left:644px;top:408.02px;width:337.5px;height:14.29px;background:#f2f2f2"></div><div class="a" style="left:644px;top:408.02px;width:337.5px;height:1px;background:#e3e6e9"></div><div class="a td lnk" style="left:646.4px;top:412.00px;font-size:6.15px;line-height:7px">00021</div><div class="a td" style="left:705px;top:412.00px;font-size:6.5px;line-height:7px">16/06/2020</div><div class="a td" style="left:793px;width:40px;text-align:center;top:412.00px;font-size:6.1px;line-height:7px">3</div><div class="a td" style="right:73.00px;top:412.00px;font-size:6.2px;line-height:7px">$ 1.060.743</div><div class="a td" style="right:20.10px;top:413.00px;font-size:6.06px;line-height:7px">Pagado</div><div class="a" style="left:644px;top:422.31px;width:337.5px;height:1px;background:#e3e6e9"></div><div class="a td lnk" style="left:646.4px;top:426.00px;font-size:6.15px;line-height:7px">00020</div><div class="a td" style="left:705px;top:426.00px;font-size:6.5px;line-height:7px">16/06/2020</div><div class="a td" style="left:793px;width:40px;text-align:center;top:426.00px;font-size:6.1px;line-height:7px">1</div><div class="a td" style="right:73.00px;top:426.00px;font-size:6.2px;line-height:7px">$ 29.991</div><div class="a td" style="right:20.10px;top:427.00px;font-size:6.06px;line-height:7px">Pagado</div><div class="a" style="left:643.4px;top:447px;font-size:7.25px;line-height:8px;color:#212529;transform:scaleY(1.12);transform-origin:0 6.5px">Registros del 1 al 10 de 25</div><div class="a" style="left:856.5px;top:440.2px;width:125.39999999999998px;height:17.5px;border:1px solid #dee2e6;border-radius:2.5px;background:#fff"></div><div class="a" style="left:856.5px;width:37.5px;text-align:center;top:445.6px;font-size:7.3px;line-height:8px;color:#6c757d;transform:scaleY(1.15);transform-origin:0 6.5px">Anterior</div><div class="a" style="left:894px;top:440.2px;width:1px;height:17.5px;background:#dee2e6"></div><div class="a" style="left:894px;top:440.2px;width:16px;height:17.5px;background:#007bff"></div><div class="a" style="left:894px;width:16px;text-align:center;top:445.6px;font-size:7.3px;line-height:8px;color:#fff;transform:scaleY(1.15);transform-origin:0 6.5px">1</div><div class="a" style="left:910px;top:440.2px;width:1px;height:17.5px;background:#dee2e6"></div><div class="a" style="left:910px;width:15.600000000000023px;text-align:center;top:445.6px;font-size:7.3px;line-height:8px;color:#007bff;transform:scaleY(1.15);transform-origin:0 6.5px">2</div><div class="a" style="left:925.6px;top:440.2px;width:1px;height:17.5px;background:#dee2e6"></div><div class="a" style="left:925.6px;width:15.199999999999932px;text-align:center;top:445.6px;font-size:7.3px;line-height:8px;color:#007bff;transform:scaleY(1.15);transform-origin:0 6.5px">3</div><div class="a" style="left:940.8px;top:440.2px;width:1px;height:17.5px;background:#dee2e6"></div><div class="a" style="left:940.8px;width:41.10000000000002px;text-align:center;top:445.6px;font-size:7.3px;line-height:8px;color:#007bff;transform:scaleY(1.15);transform-origin:0 6.5px">Siguiente</div></div></body></html>
